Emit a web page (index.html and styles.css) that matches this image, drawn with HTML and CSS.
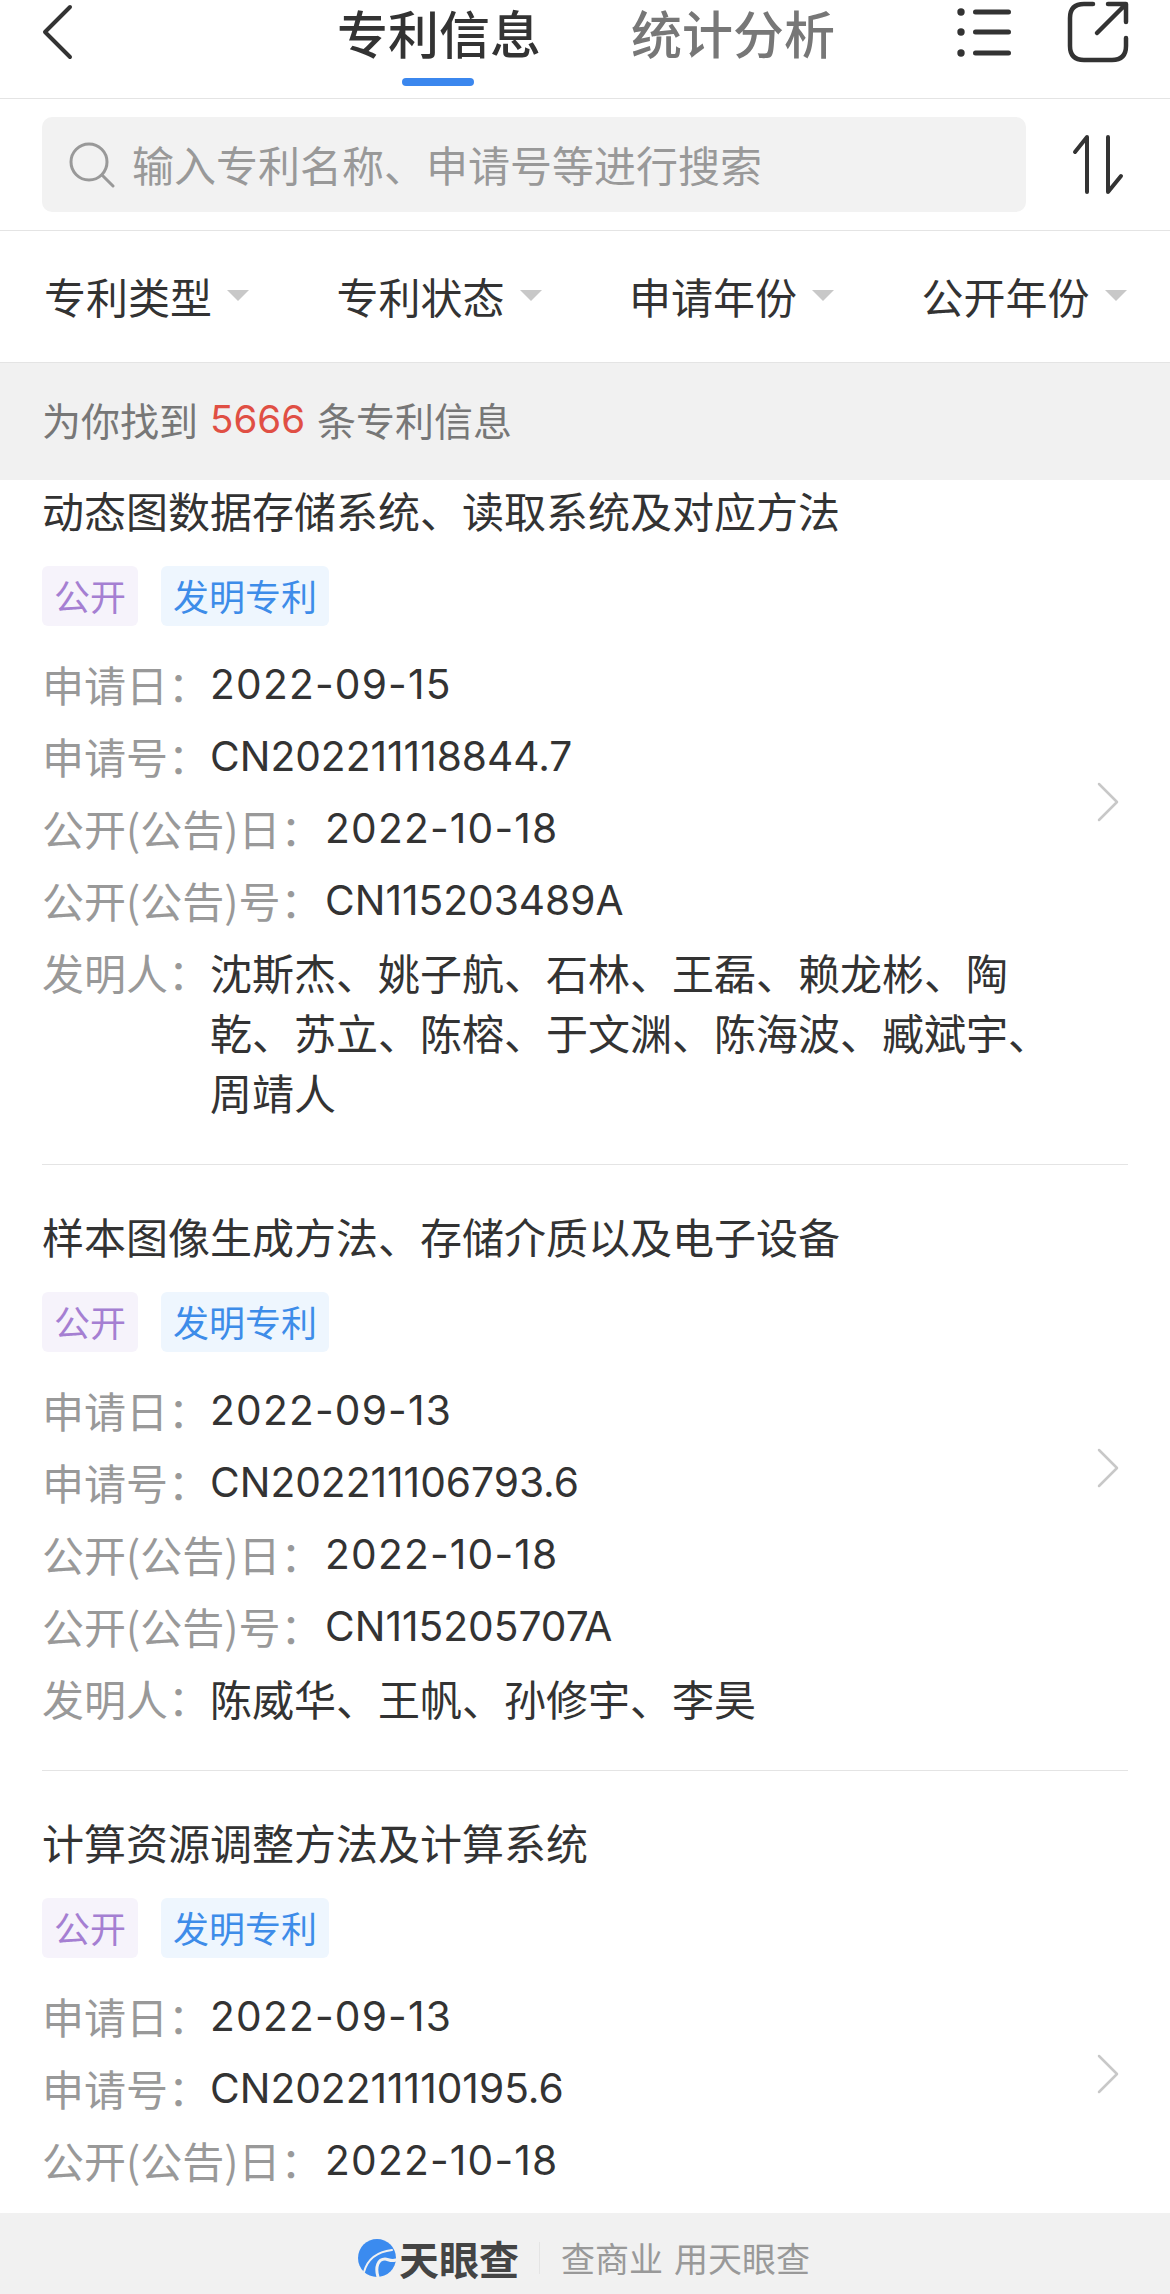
FILE: index.html
```html
<!DOCTYPE html>
<html lang="zh-CN">
    <head>
        <title>专利信息</title>
        <meta charset="utf-8" />
        <meta name="viewport" content="width=device-width, initial-scale=1">
        <link rel="stylesheet" href="styles.css">
    </head>
    <body>
        <div class="page">
            <header class="topbar">
                <svg class="back" viewBox="0 0 32 56"><path d="M29 3 L4 28 L29 53"/></svg>
                <nav class="tabs">
                    <a class="tab active">专利信息</a>
                    <a class="tab">统计分析</a>
                </nav>
                <svg class="menu" viewBox="0 0 56 52">
                    <path d="M18.5 5 H51.5 M18.5 25 H51.5 M18.5 46 H51.5"/>
                    <circle cx="4" cy="5" r="3.7"/><circle cx="4" cy="25" r="3.7"/><circle cx="4" cy="46" r="3.7"/>
                </svg>
                <svg class="share" viewBox="0 0 64 64">
                    <path d="M27 4 H18 Q4 4 4 18 V46 Q4 60 18 60 H46 Q60 60 60 46 V38"/>
                    <path d="M31 33 L59 5 M42 4 H60 V22"/>
                </svg>
            </header>

            <div class="searchbar">
                <div class="searchbox">
                    <svg class="search-icon" viewBox="0 0 46 46"><circle cx="20" cy="20" r="18"/><path d="M33 33 L44 44"/></svg>
                    <span class="placeholder">输入专利名称、申请号等进行搜索</span>
                </div>
                <svg class="sort" viewBox="0 0 54 62"><path d="M15 58 V3 L3 18"/><path d="M36 3 V58 L49 42"/></svg>
            </div>

            <div class="filters">
                <div class="filter">专利类型<i class="caret"></i></div>
                <div class="filter">专利状态<i class="caret"></i></div>
                <div class="filter">申请年份<i class="caret"></i></div>
                <div class="filter">公开年份<i class="caret"></i></div>
            </div>

            <div class="count"><span>为你找到</span><em>5666</em><span>条专利信息</span></div>

            <main class="list">
                <section class="card">
                    <div class="card-main">
                        <h2>动态图数据存储系统、读取系统及对应方法</h2>
                        <div class="tags"><span class="tag purple">公开</span><span class="tag blue">发明专利</span></div>
                        <div class="row"><span class="label">申请日：</span><span class="value date">2022-09-15</span></div>
                        <div class="row"><span class="label">申请号：</span><span class="value">CN202211118844.7</span></div>
                        <div class="row"><span class="label wide">公开(公告)日：</span><span class="value date">2022-10-18</span></div>
                        <div class="row"><span class="label wide">公开(公告)号：</span><span class="value">CN115203489A</span></div>
                        <div class="row"><span class="label">发明人：</span><span class="names">沈斯杰、姚子航、石林、王磊、赖龙彬、陶乾、苏立、陈榕、于文渊、陈海波、臧斌宇、周靖人</span></div>
                    </div>
                    <svg class="chevron" viewBox="0 0 24 40"><path d="M3 2 L21 20 L3 38"/></svg>
                </section>

                <section class="card">
                    <div class="card-main">
                        <h2>样本图像生成方法、存储介质以及电子设备</h2>
                        <div class="tags"><span class="tag purple">公开</span><span class="tag blue">发明专利</span></div>
                        <div class="row"><span class="label">申请日：</span><span class="value date">2022-09-13</span></div>
                        <div class="row"><span class="label">申请号：</span><span class="value">CN202211106793.6</span></div>
                        <div class="row"><span class="label wide">公开(公告)日：</span><span class="value date">2022-10-18</span></div>
                        <div class="row"><span class="label wide">公开(公告)号：</span><span class="value">CN115205707A</span></div>
                        <div class="row"><span class="label">发明人：</span><span class="names">陈威华、王帆、孙修宇、李昊</span></div>
                    </div>
                    <svg class="chevron" viewBox="0 0 24 40"><path d="M3 2 L21 20 L3 38"/></svg>
                </section>

                <section class="card cut">
                    <div class="card-main">
                        <h2>计算资源调整方法及计算系统</h2>
                        <div class="tags"><span class="tag purple">公开</span><span class="tag blue">发明专利</span></div>
                        <div class="row"><span class="label">申请日：</span><span class="value date">2022-09-13</span></div>
                        <div class="row"><span class="label">申请号：</span><span class="value">CN202211110195.6</span></div>
                        <div class="row"><span class="label wide">公开(公告)日：</span><span class="value date">2022-10-18</span></div>
                    </div>
                    <svg class="chevron" viewBox="0 0 24 40"><path d="M3 2 L21 20 L3 38"/></svg>
                </section>
            </main>

            <footer class="footer">
                <svg class="logo" viewBox="0 0 38 38">
                    <circle cx="19" cy="19" r="19" fill="#3b8bef"/>
                    <path d="M6 33 C9 22 17 13 34 11" fill="none" stroke="#f1f1f1" stroke-width="2"/>
                    <path d="M20 38 C17 28 20 20 27 20 C30 20 33 23 38 21" fill="none" stroke="#f1f1f1" stroke-width="3"/>
                </svg>
                <span class="brand">天眼查</span>
                <span class="divider"></span>
                <span class="slogan">查商业</span>
                <span class="slogan">用天眼查</span>
            </footer>
        </div>
    </body>
</html>
```

FILE: styles.css
```css
* { box-sizing: border-box; }
html, body { margin: 0; padding: 0; background: white; }
body {
    font-family: "Noto Sans CJK SC", "Liberation Sans", sans-serif;
    font-size: 42px;
    color: #333;
}
svg { fill: none; stroke-linecap: round; stroke-linejoin: round; flex: none; }

.page {
    width: 1170px;
    height: 2294px;
    overflow: hidden;
    display: flex;
    flex-direction: column;
}

/* Top bar */
.topbar {
    height: 99px;
    flex: none;
    display: flex;
    align-items: flex-start;
    padding: 4px 41px 0 41px;
    border-bottom: 1px solid #e4e4e4;
}
.back { width: 32px; height: 56px; stroke: #333; stroke-width: 4; }
.tabs { display: flex; gap: 92px; margin-left: 264px; }
.tab {
    display: block;
    width: 202px;
    height: 82px;
    font-size: 51px;
    font-weight: 500;
    line-height: 56px;
    color: #777;
    position: relative;
    white-space: nowrap;
}
.tab.active { color: #333; }
.tab.active::after {
    content: "";
    position: absolute;
    left: 65px;
    bottom: 0;
    width: 72px;
    height: 8px;
    border-radius: 4px;
    background: #3b87ee;
}
.menu { width: 56px; height: 52px; margin: 3px 0 0 124px; stroke: #333; stroke-width: 5; }
.menu circle { fill: #333; stroke: none; }
.share { width: 64px; height: 64px; margin: -4px 0 0 53px; stroke: #333; stroke-width: 4.5; }

/* Search */
.searchbar {
    height: 132px;
    flex: none;
    display: flex;
    align-items: center;
    padding-left: 42px;
    border-bottom: 1px solid #e4e4e4;
}
.searchbox {
    width: 984px;
    height: 95px;
    display: flex;
    align-items: center;
    gap: 17px;
    padding-left: 27px;
    border-radius: 10px;
    background: #f2f2f2;
    color: #999;
}
.placeholder { margin-top: -3px; }
.search-icon { width: 46px; height: 46px; stroke: #999; stroke-width: 3; }
.sort { width: 54px; height: 62px; margin-left: 46px; stroke: #333; stroke-width: 4; }

/* Filters */
.filters {
    height: 132px;
    flex: none;
    display: flex;
    border-bottom: 1px solid #e4e4e4;
    padding: 0 0 3px 44px;
}
.filter {
    width: 292.5px;
    flex: none;
    display: flex;
    align-items: center;
    gap: 15px;
}
.caret {
    width: 0;
    height: 0;
    border-left: 11px solid transparent;
    border-right: 11px solid transparent;
    border-top: 11px solid #c8c8c8;
}

/* Result count */
.count {
    height: 117px;
    flex: none;
    display: flex;
    align-items: center;
    gap: 12px;
    padding: 0 0 5px 42px;
    background: #f1f1f1;
    color: #777;
    font-size: 39px;
}
.count em { font-family: Inter, "Liberation Sans", sans-serif; font-size: 38.5px; font-style: normal; color: #e04f44; }

/* List */
.list { flex: 1; min-height: 0; overflow: hidden; }
.card {
    display: flex;
    align-items: center;
    margin: 0 42px;
    border-bottom: 1px solid #e4e4e4;
}
.card:first-child { margin-top: -41px; }
.card.cut { height: 606px; align-items: flex-start; }
.card.cut .chevron { margin-top: 283px; }
.card-main { width: 1022px; padding: 41px 0 42px; }
.card h2 {
    margin: 0;
    font-size: 42px;
    font-weight: 400;
    line-height: 60px;
    color: #333;
}
.tags { display: flex; gap: 23px; margin: 26px 0 28px; }
.tag {
    height: 60px;
    padding: 0 12px;
    border-radius: 6px;
    font-size: 36px;
    line-height: 58px;
}
.tag.purple { background: #f6f3fb; color: #a57fd2; }
.tag.blue { background: #eef6fe; color: #3d8ce9; }
.row { display: flex; margin-top: 12px; line-height: 60px; }
.label { width: 168px; flex: none; color: #999; }
.label.wide { width: 283px; }
.value { font-family: Inter, "Liberation Sans", sans-serif; font-size: 40.7px; margin: 1px 0 -1px; }
.value.date { letter-spacing: 1.2px; }
.names { flex: 1; }
.chevron { width: 24px; height: 40px; margin-left: 32px; stroke: #c8c8c8; stroke-width: 2.5; }

/* Footer */
.footer {
    height: 81px;
    flex: none;
    display: flex;
    align-items: center;
    padding: 8px 0 0 358px;
    background: #f1f1f1;
}
.logo { width: 38px; height: 38px; }
.brand { margin-left: 3px; font-size: 40px; font-weight: 700; color: #444; }
.divider { width: 1px; height: 32px; margin: 0 21px 0 20px; background: #e4e4e4; }
.slogan { font-size: 34px; color: #999; margin-right: 11px; }
```
